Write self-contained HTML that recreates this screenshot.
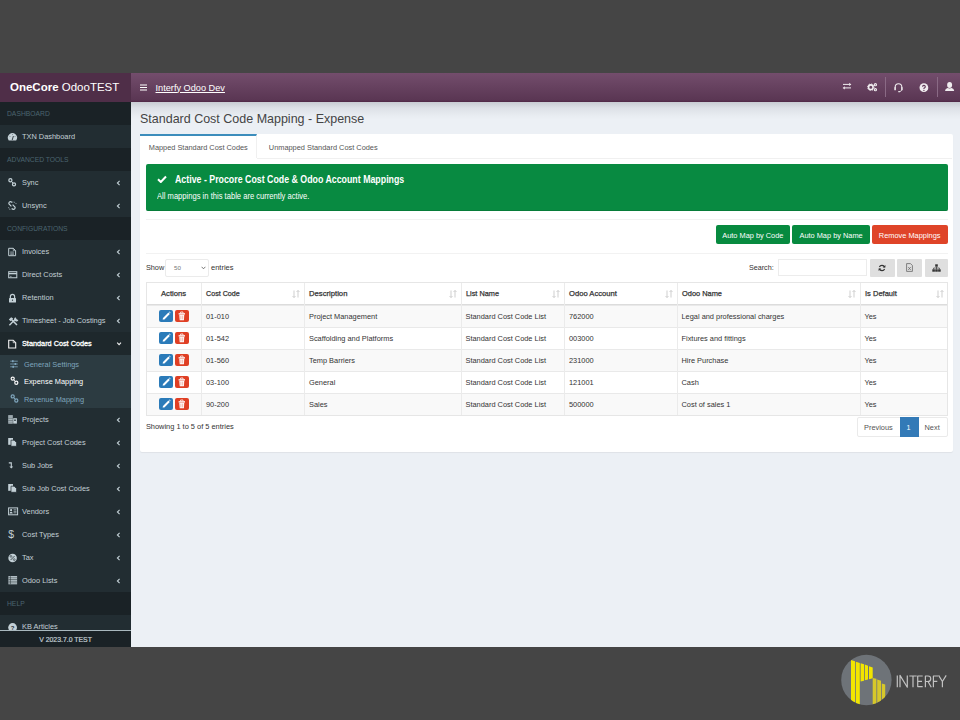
<!DOCTYPE html>
<html><head><meta charset="utf-8">
<style>
*{box-sizing:border-box;margin:0;padding:0}
html,body{width:960px;height:720px;overflow:hidden;background:#454545;font-family:"Liberation Sans",sans-serif}
.abs{position:absolute}
#app{position:absolute;left:0;top:73px;width:960px;height:574px;background:#ecf0f5;overflow:hidden}
#brand{position:absolute;left:0;top:0;width:131px;height:29px;background:#4f2e48;color:#fff;font-size:11.5px;white-space:nowrap}
#nav{position:absolute;left:131px;top:0;width:829px;height:29px;background:linear-gradient(#734d6c,#5a3653 93%,#4f2745 100%)}
#side{position:absolute;left:0;top:29px;width:131px;height:545px;background:#222d32;overflow:hidden}
.row{position:absolute;left:0;width:131px;height:23px;white-space:nowrap}
.hdr{background:#1a2226;color:#4b646f;font-size:6.75px}
.hdr span{position:absolute;left:7px;top:8px}
.mi{color:#c3d0d6;font-size:7.4px;line-height:7.4px}
.mi.act{background:#1e282c;color:#fff;font-size:7.3px;line-height:7.3px;-webkit-text-stroke:0.3px #fff}
.mi .t{position:absolute;left:22px;top:8px}
.mi.act .t{top:8.3px}
.mi .ic{position:absolute;left:5px;top:4.5px;width:14px;height:14px;line-height:0}
.mi .ch{position:absolute;left:116px;top:8px;width:6px;height:8px;line-height:0}
.sub{position:absolute;left:0;width:131px;background:#2c3b41}
.si{position:absolute;left:0;width:131px;height:17px;font-size:7.4px;color:#7fa5bc;white-space:nowrap}
.si .t{position:absolute;left:24px;top:4px}
.si .ic{position:absolute;left:7px;top:0;width:14px;height:14px;line-height:0}
svg{display:block}
#foot{position:absolute;left:0;top:528px;width:131px;height:17px;background:#1a2226;border-top:1px solid #a9b8be;color:#c0ccd1;font-size:6.9px;line-height:6.9px;-webkit-text-stroke:0.2px #c0ccd1;text-align:center;padding-top:5.6px}
#content{position:absolute;left:131px;top:28px;width:829px;height:546px}
.box{position:absolute;left:9px;top:33px;width:812px;height:317px;background:#fff;border-radius:2px}
.th{font-size:7.7px;line-height:7.7px;color:#333;-webkit-text-stroke:0.25px #333;white-space:nowrap}
.th span{transform-origin:0 0}
.td{font-size:7.4px;color:#333;white-space:nowrap}
.btnsm{width:13.5px;height:12.2px;border-radius:2px}
.btn{position:absolute;top:152px;height:19px;border-radius:2px;color:#fff;font-size:7.4px;text-align:center;padding-top:5.5px;white-space:nowrap}
.ibtn{position:absolute;top:186px;height:17.5px;background:#dfdfdf;border-radius:1px}
</style></head>
<body>
<div id="app">
  <div id="brand"><span class="abs" style="left:10px;top:8px"><b>OneCore</b> OdooTEST</span></div>
  <div id="nav">
    <svg class="abs" style="left:9px;top:11px" width="7" height="7" viewBox="0 0 7 7"><path d="M0 1 H7 M0 3.5 H7 M0 6 H7" stroke="#fff" stroke-width="1.2"/></svg>
    <span class="abs" style="left:24.5px;top:9.5px;color:#fff;font-size:9.2px;text-decoration:underline;white-space:nowrap">Interfy Odoo Dev</span>
  </div>
  <div id="side">
<div class="row hdr" style="top:0px"><span>DASHBOARD</span></div>
<div class="row mi" style="top:23px"><span class="ic"><svg width="14" height="14" viewBox="0 0 14 14" ><path d="M3.75 10.4 A4.55 4.55 0 1 1 11.15 10.4 Z" fill="#c3d0d6"/><path d="M7.2 10 L8.4 6" stroke="#222d32" stroke-width="0.9"/><circle cx="5" cy="6.6" r="0.45" fill="#222d32"/><circle cx="7.45" cy="4.6" r="0.45" fill="#222d32"/><circle cx="10" cy="6.6" r="0.45" fill="#222d32"/></svg></span><span class="t">TXN Dashboard</span></div>
<div class="row hdr" style="top:46px"><span>ADVANCED TOOLS</span></div>
<div class="row mi" style="top:69px"><span class="ic"><svg width="14" height="14" viewBox="0 0 14 14" ><circle cx="5.4" cy="4.2" r="1.55" fill="none" stroke="#c3d0d6" stroke-width="1.25"/><circle cx="9" cy="8.3" r="1.55" fill="none" stroke="#c3d0d6" stroke-width="1.25"/><path d="M6.3 5.3 L8.1 7.2" stroke="#c3d0d6" stroke-width="1"/></svg></span><span class="t">Sync</span><span class="ch"><svg width="5" height="8" viewBox="0 0 5 8" ><path d="M3.6 1.9 L1.4 4 L3.6 6.1" fill="none" stroke="#c3d0d6" stroke-width="1.1"/></svg></span></div>
<div class="row mi" style="top:92px"><span class="ic"><svg width="14" height="14" viewBox="0 0 14 14" ><path d="M7.4 3.4 L6.2 2.9 A1.6 1.6 0 0 0 4 5 L6.4 7.4" fill="none" stroke="#c3d0d6" stroke-width="1.2"/><path d="M7.6 5.6 L10 8 A1.6 1.6 0 0 1 7.8 10.1 L6.6 9.6" fill="none" stroke="#c3d0d6" stroke-width="1.2"/><path d="M9 2.6 L9.4 4 M10.4 4.4 L11.6 4.6 M3 8.6 L4.2 8.8 M4.6 9.6 L5 11" stroke="#c3d0d6" stroke-width="0.6"/></svg></span><span class="t">Unsync</span><span class="ch"><svg width="5" height="8" viewBox="0 0 5 8" ><path d="M3.6 1.9 L1.4 4 L3.6 6.1" fill="none" stroke="#c3d0d6" stroke-width="1.1"/></svg></span></div>
<div class="row hdr" style="top:115px"><span>CONFIGURATIONS</span></div>
<div class="row mi" style="top:138px"><span class="ic"><svg width="14" height="14" viewBox="0 0 14 14" ><path d="M3.7 3.3 H8.3 L10.6 5.6 V10.7 H3.7 Z" fill="none" stroke="#c3d0d6" stroke-width="1"/><path d="M8.3 3.3 V5.6 H10.6" fill="none" stroke="#c3d0d6" stroke-width="0.7"/><path d="M5.2 7 H9 M5.2 8.2 H9 M5.2 9.4 H9" stroke="#c3d0d6" stroke-width="0.6"/></svg></span><span class="t">Invoices</span><span class="ch"><svg width="5" height="8" viewBox="0 0 5 8" ><path d="M3.6 1.9 L1.4 4 L3.6 6.1" fill="none" stroke="#c3d0d6" stroke-width="1.1"/></svg></span></div>
<div class="row mi" style="top:161px"><span class="ic"><svg width="14" height="14" viewBox="0 0 14 14" ><rect x="3.7" y="3.7" width="8.1" height="6.05" fill="none" stroke="#c3d0d6" stroke-width="1"/><rect x="3.7" y="4.9" width="8.1" height="1.4" fill="#c3d0d6"/><path d="M5 8.4 H6.6" stroke="#c3d0d6" stroke-width="0.6"/></svg></span><span class="t">Direct Costs</span><span class="ch"><svg width="5" height="8" viewBox="0 0 5 8" ><path d="M3.6 1.9 L1.4 4 L3.6 6.1" fill="none" stroke="#c3d0d6" stroke-width="1.1"/></svg></span></div>
<div class="row mi" style="top:184px"><span class="ic"><svg width="14" height="14" viewBox="0 0 14 14" ><rect x="4" y="7" width="7" height="4.5" rx="0.5" fill="#c3d0d6"/><path d="M5.4 7 V5.4 A2.1 2.1 0 0 1 9.6 5.4 V7" fill="none" stroke="#c3d0d6" stroke-width="1.2"/><circle cx="7.5" cy="9.2" r="0.6" fill="#222d32"/></svg></span><span class="t">Retention</span><span class="ch"><svg width="5" height="8" viewBox="0 0 5 8" ><path d="M3.6 1.9 L1.4 4 L3.6 6.1" fill="none" stroke="#c3d0d6" stroke-width="1.1"/></svg></span></div>
<div class="row mi" style="top:207px"><span class="ic"><svg width="14" height="14" viewBox="0 0 14 14" ><path d="M4.4 11.2 L11 4.6" stroke="#c3d0d6" stroke-width="1.4"/><path d="M10.6 3.2 A2.2 2.2 0 1 0 13.4 6 L12 5.6 L11.2 4.8 Z" fill="#c3d0d6"/><path d="M6.6 5.6 L12 11" stroke="#c3d0d6" stroke-width="1.5"/><path d="M3.8 5.4 L6.2 3.3 L8.2 4.6 L5.6 7.2 Z" fill="#c3d0d6"/></svg></span><span class="t">Timesheet - Job Costings</span><span class="ch"><svg width="5" height="8" viewBox="0 0 5 8" ><path d="M3.6 1.9 L1.4 4 L3.6 6.1" fill="none" stroke="#c3d0d6" stroke-width="1.1"/></svg></span></div>
<div class="row mi act" style="top:230px"><span class="ic"><svg width="14" height="14" viewBox="0 0 14 14" ><path d="M3.7 3.2 H8.2 L10.7 5.7 V11 H3.7 Z" fill="none" stroke="#f2f2f2" stroke-width="1.1"/><path d="M8.2 3.2 V5.7 H10.7" fill="none" stroke="#f2f2f2" stroke-width="0.7"/></svg></span><span class="t">Standard Cost Codes</span><span class="ch"><svg width="6" height="7" viewBox="0 0 6 7" ><path d="M1.2 2.7 L3.1 4.6 L5 2.7" fill="none" stroke="#f2f2f2" stroke-width="1.1"/></svg></span></div>
<div class="sub" style="top:253px;height:53px"><div class="si" style="top:0.8px"><span class="ic"><svg width="14" height="14" viewBox="0 0 14 14" ><path d="M3.2 5.2 H10.8 M3.2 8 H10.8 M3.2 10.8 H10.8" stroke="#7fa5bc" stroke-width="0.8"/><rect x="5" y="4.2" width="1.6" height="2" fill="#7fa5bc"/><rect x="7.6" y="7" width="1.6" height="2" fill="#7fa5bc"/><rect x="5.4" y="9.8" width="1.6" height="2" fill="#7fa5bc"/></svg></span><span class="t">General Settings</span></div><div class="si" style="top:18.2px;color:#fff"><span class="ic"><svg width="14" height="14" viewBox="0 0 14 14" ><g transform="translate(0.3 1.4)"><circle cx="5.4" cy="4.2" r="1.55" fill="none" stroke="#f5f5f5" stroke-width="1.25"/><circle cx="9" cy="8.3" r="1.55" fill="none" stroke="#f5f5f5" stroke-width="1.25"/><path d="M6.3 5.3 L8.1 7.2" stroke="#f5f5f5" stroke-width="1"/></g></svg></span><span class="t">Expense Mapping</span></div><div class="si" style="top:35.6px"><span class="ic"><svg width="14" height="14" viewBox="0 0 14 14" ><g transform="translate(0.3 1.2)"><circle cx="5.4" cy="4.2" r="1.55" fill="none" stroke="#7fa5bc" stroke-width="1.25"/><circle cx="9" cy="8.3" r="1.55" fill="none" stroke="#7fa5bc" stroke-width="1.25"/><path d="M6.3 5.3 L8.1 7.2" stroke="#7fa5bc" stroke-width="1"/></g></svg></span><span class="t">Revenue Mapping</span></div></div>
<div class="row mi" style="top:306px"><span class="ic"><svg width="14" height="14" viewBox="0 0 14 14" ><rect x="3.2" y="2.3" width="4.6" height="8.3" fill="#c3d0d6"/><rect x="8.2" y="5.2" width="3.7" height="5.4" fill="#c3d0d6"/><path d="M3.2 4 H7.8 M3.2 5.7 H7.8 M3.2 7.4 H7.8 M3.2 9.1 H7.8" stroke="#222d32" stroke-width="0.5"/><rect x="9.2" y="6.5" width="1.6" height="1.4" fill="#222d32"/></svg></span><span class="t">Projects</span><span class="ch"><svg width="5" height="8" viewBox="0 0 5 8" ><path d="M3.6 1.9 L1.4 4 L3.6 6.1" fill="none" stroke="#c3d0d6" stroke-width="1.1"/></svg></span></div>
<div class="row mi" style="top:329px"><span class="ic"><svg width="14" height="14" viewBox="0 0 14 14" ><rect x="3.2" y="2" width="4.8" height="6.8" fill="#c3d0d6"/><path d="M6 4.2 H9.2 L11.5 6.5 V10.3 H6 Z" fill="#c3d0d6" stroke="#222d32" stroke-width="0.7"/></svg></span><span class="t">Project Cost Codes</span><span class="ch"><svg width="5" height="8" viewBox="0 0 5 8" ><path d="M3.6 1.9 L1.4 4 L3.6 6.1" fill="none" stroke="#c3d0d6" stroke-width="1.1"/></svg></span></div>
<div class="row mi" style="top:352px"><span class="ic"><svg width="14" height="14" viewBox="0 0 14 14" ><path d="M3.8 3.9 H6.3 V8" fill="none" stroke="#c3d0d6" stroke-width="1.1"/><path d="M4.4 7.6 H8.2 L6.3 9.6 Z" fill="#c3d0d6"/></svg></span><span class="t">Sub Jobs</span><span class="ch"><svg width="5" height="8" viewBox="0 0 5 8" ><path d="M3.6 1.9 L1.4 4 L3.6 6.1" fill="none" stroke="#c3d0d6" stroke-width="1.1"/></svg></span></div>
<div class="row mi" style="top:375px"><span class="ic"><svg width="14" height="14" viewBox="0 0 14 14" ><rect x="3.2" y="2" width="4.8" height="6.8" fill="#c3d0d6"/><path d="M6 4.2 H9.2 L11.5 6.5 V10.3 H6 Z" fill="#c3d0d6" stroke="#222d32" stroke-width="0.7"/></svg></span><span class="t">Sub Job Cost Codes</span><span class="ch"><svg width="5" height="8" viewBox="0 0 5 8" ><path d="M3.6 1.9 L1.4 4 L3.6 6.1" fill="none" stroke="#c3d0d6" stroke-width="1.1"/></svg></span></div>
<div class="row mi" style="top:398px"><span class="ic"><svg width="14" height="14" viewBox="0 0 14 14" ><rect x="3.6" y="2.9" width="9" height="6.9" fill="none" stroke="#c3d0d6" stroke-width="1"/><circle cx="6.1" cy="5.2" r="1.1" fill="#c3d0d6"/><path d="M4.5 8.6 Q4.6 6.7 6.1 6.7 Q7.6 6.7 7.7 8.6 Z" fill="#c3d0d6"/><path d="M8.6 4.8 H11.5 M8.6 6.3 H11.5 M8.6 7.8 H11.5" stroke="#c3d0d6" stroke-width="0.7"/></svg></span><span class="t">Vendors</span><span class="ch"><svg width="5" height="8" viewBox="0 0 5 8" ><path d="M3.6 1.9 L1.4 4 L3.6 6.1" fill="none" stroke="#c3d0d6" stroke-width="1.1"/></svg></span></div>
<div class="row mi" style="top:421px"><span class="ic"><svg width="14" height="14" viewBox="0 0 14 14" ><text x="6.1" y="10.3" font-family="Liberation Sans" font-size="10.5" text-anchor="middle" fill="#c3d0d6">$</text></svg></span><span class="t">Cost Types</span><span class="ch"><svg width="5" height="8" viewBox="0 0 5 8" ><path d="M3.6 1.9 L1.4 4 L3.6 6.1" fill="none" stroke="#c3d0d6" stroke-width="1.1"/></svg></span></div>
<div class="row mi" style="top:444px"><span class="ic"><svg width="14" height="14" viewBox="0 0 14 14" ><circle cx="7.6" cy="7" r="4.3" fill="#c3d0d6"/><path d="M5.6 9 L9.6 5" stroke="#222d32" stroke-width="0.8"/><circle cx="6" cy="5.4" r="0.9" fill="none" stroke="#222d32" stroke-width="0.6"/><circle cx="9.2" cy="8.6" r="0.9" fill="none" stroke="#222d32" stroke-width="0.6"/></svg></span><span class="t">Tax</span><span class="ch"><svg width="5" height="8" viewBox="0 0 5 8" ><path d="M3.6 1.9 L1.4 4 L3.6 6.1" fill="none" stroke="#c3d0d6" stroke-width="1.1"/></svg></span></div>
<div class="row mi" style="top:467px"><span class="ic"><svg width="14" height="14" viewBox="0 0 14 14" ><rect x="3.4" y="2.1" width="8.7" height="8.2" fill="#c3d0d6"/><path d="M3.4 3.8 H12.1 M3.4 5.5 H12.1 M3.4 7.2 H12.1 M3.4 8.9 H12.1 M5.4 2.1 V10.3" stroke="#222d32" stroke-width="0.55"/></svg></span><span class="t">Odoo Lists</span><span class="ch"><svg width="5" height="8" viewBox="0 0 5 8" ><path d="M3.6 1.9 L1.4 4 L3.6 6.1" fill="none" stroke="#c3d0d6" stroke-width="1.1"/></svg></span></div>
<div class="row hdr" style="top:490px"><span>HELP</span></div>
<div class="row mi" style="top:513px"><span class="ic"><svg width="14" height="14" viewBox="0 0 14 14" ><circle cx="7.6" cy="7.5" r="4.4" fill="#c3d0d6"/><text x="7.6" y="9.6" font-family="Liberation Sans" font-weight="bold" font-size="6" text-anchor="middle" fill="#222d32">?</text></svg></span><span class="t">KB Articles</span></div>
  <div id="foot">V 2023.7.0 TEST</div>
  </div>
  <div id="content">
    <div class="abs" style="left:0;top:0.7px;width:829px;height:18px;background:linear-gradient(rgba(20,25,40,0.17),rgba(20,25,40,0.07) 6px,rgba(20,25,40,0.015) 14px,rgba(20,25,40,0) 18px)"></div>
    <span class="abs" style="left:9px;top:10.8px;font-size:13.2px;line-height:13.2px;color:#444;white-space:nowrap;transform:scaleX(0.947);transform-origin:0 0">Standard Cost Code Mapping - Expense</span>
  </div>
  <div class="abs" style="left:140px;top:61px;width:813px;height:317.8px;background:#fff;border-radius:2px;box-shadow:0 1px 1px rgba(0,0,0,0.06)"></div>
  <!-- tabs -->
  <div class="abs" style="left:140px;top:61px;width:116.5px;height:24px;border-top:2px solid #3c8dbc;border-right:1px solid #f0f0f0"></div>
  <div class="abs" style="left:256.5px;top:84.5px;width:695.5px;height:1px;background:#f0f0f0"></div>
  <span class="abs" style="left:148.8px;top:69.5px;font-size:7.36px;color:#555;white-space:nowrap">Mapped Standard Cost Codes</span>
  <span class="abs" style="left:268.8px;top:69.5px;font-size:7.4px;color:#555;white-space:nowrap">Unmapped Standard Cost Codes</span>
  <!-- callout -->
  <div class="abs" style="left:146px;top:91.2px;width:802px;height:46.5px;background:#088a41;border-radius:2px;border-bottom:1px solid #067c39"></div>
  <svg class="abs" style="left:157px;top:101.5px" width="10" height="8" viewBox="0 0 10 8"><path d="M1 4.2 L3.8 7 L9 1.5" fill="none" stroke="#fff" stroke-width="2"/></svg>
  <span class="abs" style="left:174.7px;top:102.3px;font-size:10px;line-height:10px;font-weight:bold;color:#fff;white-space:nowrap;transform:scaleX(0.881);transform-origin:0 0">Active - Procore Cost Code &amp; Odoo Account Mappings</span>
  <span class="abs" style="left:156.8px;top:120px;font-size:8.2px;line-height:8.2px;color:#fff;white-space:nowrap;transform:scaleX(0.928);transform-origin:0 0">All mappings in this table are currently active.</span>
  <div class="abs" style="left:146px;top:145.5px;width:802px;height:1px;background:#f2f2f2"></div>
  <!-- buttons -->
  <div class="btn" style="left:715.5px;width:74.7px;background:#078a3f">Auto Map by Code</div>
  <div class="btn" style="left:792.4px;width:77.4px;background:#078a3f">Auto Map by Name</div>
  <div class="btn" style="left:871.5px;width:76.3px;background:#df4428">Remove Mappings</div>
  <div class="abs" style="left:146px;top:180px;width:802px;height:1px;background:#f2f2f2"></div>
  <!-- show entries -->
  <span class="abs" style="left:145.9px;top:190px;font-size:7.34px;color:#333;white-space:nowrap">Show</span>
  <div class="abs" style="left:165.2px;top:185.8px;width:44px;height:17.8px;border:1px solid #ebebeb;border-radius:2px;background:#fff"></div>
  <span class="abs" style="left:174px;top:191px;font-size:6.2px;color:#777;white-space:nowrap">50</span>
  <svg class="abs" style="left:201.2px;top:192.5px" width="5" height="4" viewBox="0 0 5 4"><path d="M0.6 0.8 L2.5 2.8 L4.4 0.8" fill="none" stroke="#555" stroke-width="0.8"/></svg>
  <span class="abs" style="left:211px;top:190px;font-size:7.5px;color:#333;white-space:nowrap">entries</span>
  <!-- search -->
  <span class="abs" style="left:749px;top:191px;font-size:7.17px;color:#333;white-space:nowrap">Search:</span>
  <div class="abs" style="left:777.7px;top:185.8px;width:89px;height:17.6px;border:1px solid #ececec;background:#fff"></div>
  <div class="ibtn" style="left:869.6px;width:25px"></div>
  <div class="ibtn" style="left:897.2px;width:25.2px"></div>
  <div class="ibtn" style="left:925px;width:22.8px"></div>
  <svg class="abs" style="left:878px;top:190.5px" width="8" height="8" viewBox="0 0 8 8"><path d="M6.6 3.2 A2.8 2.8 0 0 0 1.4 3 M1.4 4.8 A2.8 2.8 0 0 0 6.6 5" fill="none" stroke="#333" stroke-width="1.2"/><path d="M7.4 1 V3.6 H4.8 Z M0.6 7 V4.4 H3.2 Z" fill="#333"/></svg>
  <svg class="abs" style="left:906px;top:190px" width="7" height="9" viewBox="0 0 7 9"><path d="M0.6 0.6 H4.5 L6.4 2.5 V8.4 H0.6 Z" fill="none" stroke="#666" stroke-width="0.8"/><path d="M2.2 4 L4.8 7 M4.8 4 L2.2 7" stroke="#666" stroke-width="0.7"/></svg>
  <svg class="abs" style="left:932px;top:190.5px" width="9" height="8" viewBox="0 0 9 8"><rect x="3.2" y="0.3" width="2.6" height="2.4" fill="#333"/><rect x="0.3" y="5.3" width="2.6" height="2.4" fill="#333"/><rect x="3.2" y="5.3" width="2.6" height="2.4" fill="#333"/><rect x="6.1" y="5.3" width="2.6" height="2.4" fill="#333"/><path d="M4.5 2.7 V5.3 M1.6 5.3 V4 H7.4 V5.3" fill="none" stroke="#333" stroke-width="0.7"/></svg>
  <!-- table -->
<div class="abs th" style="left:146px;top:209.3px;width:55px;height:21.8px"><span class="abs" style="left:15px;top:8.1px;transform:scaleX(0.999)">Actions</span></div>
<div class="abs th" style="left:201px;top:209.3px;width:103px;height:21.8px"><span class="abs" style="left:5.2px;top:8.1px;transform:scaleX(0.930)">Cost Code</span><span class="abs" style="right:4px;top:8px;width:8px;height:8px"><svg width="8" height="8" viewBox="0 0 8 8"><path d="M2 0.5 V7.5 M0.5 6 L2 7.5 L3.5 6 M6 7.5 V0.5 M4.5 2 L6 0.5 L7.5 2" fill="none" stroke="#c9c9c9" stroke-width="0.9"/></svg></span></div>
<div class="abs th" style="left:304px;top:209.3px;width:156.5px;height:21.8px"><span class="abs" style="left:5.2px;top:8.1px;transform:scaleX(0.999)">Description</span><span class="abs" style="right:4px;top:8px;width:8px;height:8px"><svg width="8" height="8" viewBox="0 0 8 8"><path d="M2 0.5 V7.5 M0.5 6 L2 7.5 L3.5 6 M6 7.5 V0.5 M4.5 2 L6 0.5 L7.5 2" fill="none" stroke="#c9c9c9" stroke-width="0.9"/></svg></span></div>
<div class="abs th" style="left:460.5px;top:209.3px;width:103.5px;height:21.8px"><span class="abs" style="left:5.2px;top:8.1px;transform:scaleX(0.953)">List Name</span><span class="abs" style="right:4px;top:8px;width:8px;height:8px"><svg width="8" height="8" viewBox="0 0 8 8"><path d="M2 0.5 V7.5 M0.5 6 L2 7.5 L3.5 6 M6 7.5 V0.5 M4.5 2 L6 0.5 L7.5 2" fill="none" stroke="#c9c9c9" stroke-width="0.9"/></svg></span></div>
<div class="abs th" style="left:564px;top:209.3px;width:112.5px;height:21.8px"><span class="abs" style="left:5.2px;top:8.1px;transform:scaleX(0.992)">Odoo Account</span><span class="abs" style="right:4px;top:8px;width:8px;height:8px"><svg width="8" height="8" viewBox="0 0 8 8"><path d="M2 0.5 V7.5 M0.5 6 L2 7.5 L3.5 6 M6 7.5 V0.5 M4.5 2 L6 0.5 L7.5 2" fill="none" stroke="#c9c9c9" stroke-width="0.9"/></svg></span></div>
<div class="abs th" style="left:676.5px;top:209.3px;width:183.0px;height:21.8px"><span class="abs" style="left:5.2px;top:8.1px;transform:scaleX(0.965)">Odoo Name</span><span class="abs" style="right:4px;top:8px;width:8px;height:8px"><svg width="8" height="8" viewBox="0 0 8 8"><path d="M2 0.5 V7.5 M0.5 6 L2 7.5 L3.5 6 M6 7.5 V0.5 M4.5 2 L6 0.5 L7.5 2" fill="none" stroke="#c9c9c9" stroke-width="0.9"/></svg></span></div>
<div class="abs th" style="left:859.5px;top:209.3px;width:88.5px;height:21.8px"><span class="abs" style="left:5.2px;top:8.1px;transform:scaleX(0.979)">Is Default</span><span class="abs" style="right:4px;top:8px;width:8px;height:8px"><svg width="8" height="8" viewBox="0 0 8 8"><path d="M2 0.5 V7.5 M0.5 6 L2 7.5 L3.5 6 M6 7.5 V0.5 M4.5 2 L6 0.5 L7.5 2" fill="none" stroke="#c9c9c9" stroke-width="0.9"/></svg></span></div>
<div class="abs" style="left:146px;top:231.10000000000002px;width:802px;height:1.5px;background:#dcdcdc"></div>
<div class="abs" style="left:147px;top:232.10000000000002px;width:800px;height:22.05px;background:#f9f9f9;border-top:1px solid #e9e9e9"></div>
<div class="abs btnsm" style="left:159px;top:237.10000000000002px;background:#2b7bb9"><svg width="13.5" height="12" viewBox="0 0 13.5 12"><path d="M3.6 9.6 L4 8 L9.4 2.6 L10.8 4 L5.4 9.4 Z" fill="#fff"/><path d="M9.9 2.1 L10.5 1.6 L11.6 2.7 L11.3 3.3 Z" fill="#fff"/></svg></div>
<div class="abs btnsm" style="left:175px;top:237.10000000000002px;background:#df3f24"><svg width="13.5" height="12" viewBox="0 0 13.5 12"><rect x="3.6" y="3.2" width="6.4" height="1.3" fill="#fff"/><path d="M5.6 3.2 V2 H8 V3.2" fill="none" stroke="#fff" stroke-width="0.8"/><path d="M4.3 4.8 H9.3 L8.9 10.2 H4.7 Z" fill="#fff"/><path d="M5.9 5.6 V9.4 M7.7 5.6 V9.4" stroke="#e7836f" stroke-width="0.6"/></svg></div>
<span class="abs td" style="left:206px;top:238.70000000000005px">01-010</span>
<span class="abs td" style="left:309px;top:238.70000000000005px">Project Management</span>
<span class="abs td" style="left:465.5px;top:238.70000000000005px">Standard Cost Code List</span>
<span class="abs td" style="left:569px;top:238.70000000000005px">762000</span>
<span class="abs td" style="left:681.5px;top:238.70000000000005px">Legal and professional charges</span>
<span class="abs td" style="left:864.5px;top:238.70000000000005px">Yes</span>
<div class="abs" style="left:147px;top:254.15000000000003px;width:800px;height:22.05px;background:#fff;border-top:1px solid #e9e9e9"></div>
<div class="abs btnsm" style="left:159px;top:259.15000000000003px;background:#2b7bb9"><svg width="13.5" height="12" viewBox="0 0 13.5 12"><path d="M3.6 9.6 L4 8 L9.4 2.6 L10.8 4 L5.4 9.4 Z" fill="#fff"/><path d="M9.9 2.1 L10.5 1.6 L11.6 2.7 L11.3 3.3 Z" fill="#fff"/></svg></div>
<div class="abs btnsm" style="left:175px;top:259.15000000000003px;background:#df3f24"><svg width="13.5" height="12" viewBox="0 0 13.5 12"><rect x="3.6" y="3.2" width="6.4" height="1.3" fill="#fff"/><path d="M5.6 3.2 V2 H8 V3.2" fill="none" stroke="#fff" stroke-width="0.8"/><path d="M4.3 4.8 H9.3 L8.9 10.2 H4.7 Z" fill="#fff"/><path d="M5.9 5.6 V9.4 M7.7 5.6 V9.4" stroke="#e7836f" stroke-width="0.6"/></svg></div>
<span class="abs td" style="left:206px;top:260.75000000000006px">01-542</span>
<span class="abs td" style="left:309px;top:260.75000000000006px">Scaffolding and Platforms</span>
<span class="abs td" style="left:465.5px;top:260.75000000000006px">Standard Cost Code List</span>
<span class="abs td" style="left:569px;top:260.75000000000006px">003000</span>
<span class="abs td" style="left:681.5px;top:260.75000000000006px">Fixtures and fittings</span>
<span class="abs td" style="left:864.5px;top:260.75000000000006px">Yes</span>
<div class="abs" style="left:147px;top:276.20000000000005px;width:800px;height:22.05px;background:#f9f9f9;border-top:1px solid #e9e9e9"></div>
<div class="abs btnsm" style="left:159px;top:281.20000000000005px;background:#2b7bb9"><svg width="13.5" height="12" viewBox="0 0 13.5 12"><path d="M3.6 9.6 L4 8 L9.4 2.6 L10.8 4 L5.4 9.4 Z" fill="#fff"/><path d="M9.9 2.1 L10.5 1.6 L11.6 2.7 L11.3 3.3 Z" fill="#fff"/></svg></div>
<div class="abs btnsm" style="left:175px;top:281.20000000000005px;background:#df3f24"><svg width="13.5" height="12" viewBox="0 0 13.5 12"><rect x="3.6" y="3.2" width="6.4" height="1.3" fill="#fff"/><path d="M5.6 3.2 V2 H8 V3.2" fill="none" stroke="#fff" stroke-width="0.8"/><path d="M4.3 4.8 H9.3 L8.9 10.2 H4.7 Z" fill="#fff"/><path d="M5.9 5.6 V9.4 M7.7 5.6 V9.4" stroke="#e7836f" stroke-width="0.6"/></svg></div>
<span class="abs td" style="left:206px;top:282.80000000000007px">01-560</span>
<span class="abs td" style="left:309px;top:282.80000000000007px">Temp Barriers</span>
<span class="abs td" style="left:465.5px;top:282.80000000000007px">Standard Cost Code List</span>
<span class="abs td" style="left:569px;top:282.80000000000007px">231000</span>
<span class="abs td" style="left:681.5px;top:282.80000000000007px">Hire Purchase</span>
<span class="abs td" style="left:864.5px;top:282.80000000000007px">Yes</span>
<div class="abs" style="left:147px;top:298.25px;width:800px;height:22.05px;background:#fff;border-top:1px solid #e9e9e9"></div>
<div class="abs btnsm" style="left:159px;top:303.25px;background:#2b7bb9"><svg width="13.5" height="12" viewBox="0 0 13.5 12"><path d="M3.6 9.6 L4 8 L9.4 2.6 L10.8 4 L5.4 9.4 Z" fill="#fff"/><path d="M9.9 2.1 L10.5 1.6 L11.6 2.7 L11.3 3.3 Z" fill="#fff"/></svg></div>
<div class="abs btnsm" style="left:175px;top:303.25px;background:#df3f24"><svg width="13.5" height="12" viewBox="0 0 13.5 12"><rect x="3.6" y="3.2" width="6.4" height="1.3" fill="#fff"/><path d="M5.6 3.2 V2 H8 V3.2" fill="none" stroke="#fff" stroke-width="0.8"/><path d="M4.3 4.8 H9.3 L8.9 10.2 H4.7 Z" fill="#fff"/><path d="M5.9 5.6 V9.4 M7.7 5.6 V9.4" stroke="#e7836f" stroke-width="0.6"/></svg></div>
<span class="abs td" style="left:206px;top:304.85px">03-100</span>
<span class="abs td" style="left:309px;top:304.85px">General</span>
<span class="abs td" style="left:465.5px;top:304.85px">Standard Cost Code List</span>
<span class="abs td" style="left:569px;top:304.85px">121001</span>
<span class="abs td" style="left:681.5px;top:304.85px">Cash</span>
<span class="abs td" style="left:864.5px;top:304.85px">Yes</span>
<div class="abs" style="left:147px;top:320.3px;width:800px;height:22.05px;background:#f9f9f9;border-top:1px solid #e9e9e9"></div>
<div class="abs btnsm" style="left:159px;top:325.3px;background:#2b7bb9"><svg width="13.5" height="12" viewBox="0 0 13.5 12"><path d="M3.6 9.6 L4 8 L9.4 2.6 L10.8 4 L5.4 9.4 Z" fill="#fff"/><path d="M9.9 2.1 L10.5 1.6 L11.6 2.7 L11.3 3.3 Z" fill="#fff"/></svg></div>
<div class="abs btnsm" style="left:175px;top:325.3px;background:#df3f24"><svg width="13.5" height="12" viewBox="0 0 13.5 12"><rect x="3.6" y="3.2" width="6.4" height="1.3" fill="#fff"/><path d="M5.6 3.2 V2 H8 V3.2" fill="none" stroke="#fff" stroke-width="0.8"/><path d="M4.3 4.8 H9.3 L8.9 10.2 H4.7 Z" fill="#fff"/><path d="M5.9 5.6 V9.4 M7.7 5.6 V9.4" stroke="#e7836f" stroke-width="0.6"/></svg></div>
<span class="abs td" style="left:206px;top:326.90000000000003px">90-200</span>
<span class="abs td" style="left:309px;top:326.90000000000003px">Sales</span>
<span class="abs td" style="left:465.5px;top:326.90000000000003px">Standard Cost Code List</span>
<span class="abs td" style="left:569px;top:326.90000000000003px">500000</span>
<span class="abs td" style="left:681.5px;top:326.90000000000003px">Cost of sales 1</span>
<span class="abs td" style="left:864.5px;top:326.90000000000003px">Yes</span>
<div class="abs" style="left:201px;top:209.3px;width:1px;height:133.05px;background:#ebebeb"></div>
<div class="abs" style="left:304px;top:209.3px;width:1px;height:133.05px;background:#ebebeb"></div>
<div class="abs" style="left:460.5px;top:209.3px;width:1px;height:133.05px;background:#ebebeb"></div>
<div class="abs" style="left:564px;top:209.3px;width:1px;height:133.05px;background:#ebebeb"></div>
<div class="abs" style="left:676.5px;top:209.3px;width:1px;height:133.05px;background:#ebebeb"></div>
<div class="abs" style="left:859.5px;top:209.3px;width:1px;height:133.05px;background:#ebebeb"></div>
<div class="abs" style="left:146px;top:209.3px;width:802px;height:133.75px;border:1px solid #e6e6e6"></div>
  <span class="abs" style="left:145.9px;top:349px;font-size:7.43px;color:#333;white-space:nowrap">Showing 1 to 5 of 5 entries</span>
  <!-- pagination -->
  <div class="abs" style="left:857px;top:344px;width:91px;height:19.5px;border:1px solid #eaeaea;border-radius:2px;background:#fff"></div>
  <div class="abs" style="left:900.2px;top:344px;width:18.4px;height:19.5px;background:#337ab7"></div>
  <span class="abs" style="left:864px;top:350px;font-size:7.4px;color:#555;white-space:nowrap">Previous</span>
  <span class="abs" style="left:906.5px;top:350px;font-size:7.2px;color:#fff;white-space:nowrap">1</span>
  <span class="abs" style="left:924.5px;top:350px;font-size:7.4px;color:#555;white-space:nowrap">Next</span>
</div>

<svg class="abs" style="left:842px;top:82px" width="12" height="10" viewBox="0 0 12 10"><path d="M1 2.4 H7.6 M2.4 5.9 H9" stroke="#f0ecef" stroke-width="1"/><path d="M7.2 0.8 L9.4 2.4 L7.2 4 Z M2.8 4.3 L0.6 5.9 L2.8 7.5 Z" fill="#f0ecef"/></svg>
<svg class="abs" style="left:866px;top:82px" width="12" height="10" viewBox="0 0 12 10"><circle cx="4.8" cy="5.2" r="2.3" fill="none" stroke="#f0ecef" stroke-width="1.6"/><circle cx="4.8" cy="5.2" r="3.3" fill="none" stroke="#f0ecef" stroke-width="0.9" stroke-dasharray="1.1 1.5"/><circle cx="9.4" cy="2.7" r="1.1" fill="none" stroke="#f0ecef" stroke-width="1.1"/><circle cx="9.4" cy="7.7" r="1.1" fill="none" stroke="#f0ecef" stroke-width="1.1"/></svg>
<div class="abs" style="left:885px;top:77px;width:1px;height:20px;background:#8a6a85"></div>
<svg class="abs" style="left:893px;top:82px" width="11" height="11" viewBox="0 0 11 11"><path d="M2.2 6 V5 A3.3 3.3 0 0 1 8.8 5 V6" fill="none" stroke="#f0ecef" stroke-width="1.1"/><rect x="1.3" y="5.2" width="1.6" height="3" rx="0.5" fill="#f0ecef"/><rect x="8.1" y="5.2" width="1.6" height="3" rx="0.5" fill="#f0ecef"/><path d="M8.6 8 Q8.4 9.4 6.8 9.6" fill="none" stroke="#f0ecef" stroke-width="0.8"/><rect x="5.2" y="8.9" width="1.8" height="1.3" rx="0.5" fill="#f0ecef"/></svg>
<svg class="abs" style="left:919px;top:82.5px" width="10" height="10" viewBox="0 0 10 10"><circle cx="4.9" cy="4.7" r="4.4" fill="#f0ecef"/><path d="M3.6 3.7 A1.35 1.35 0 1 1 5.3 5 Q4.9 5.3 4.9 6" fill="none" stroke="#5f3b58" stroke-width="1.1"/><circle cx="4.9" cy="7.4" r="0.65" fill="#5f3b58"/></svg>
<div class="abs" style="left:936.5px;top:77px;width:1px;height:20px;background:#8a6a85"></div>
<svg class="abs" style="left:944px;top:81px" width="11" height="11" viewBox="0 0 11 11"><ellipse cx="5.6" cy="3.9" rx="2.5" ry="3" fill="#f0ecef"/><path d="M1 10.1 Q1.2 7.6 3.6 7 L5.6 7.6 L7.6 7 Q10 7.6 10.2 10.1 Z" fill="#f0ecef"/></svg>

<!-- logo -->
<svg class="abs" style="left:836px;top:650px" width="60" height="60" viewBox="0 0 60 60">
  <defs><clipPath id="cc"><circle cx="30.4" cy="30" r="25.2"/></clipPath></defs>
  <circle cx="30.4" cy="30" r="25.2" fill="#6e7378"/>
  <g clip-path="url(#cc)">
    <path d="M15 10 L19 11.2 V60 H15 Z" fill="#f2e600"/>
    <path d="M19.8 11.7 L23.8 12.9 V60 H19.8 Z" fill="#f2e600"/>
    <path d="M24.6 13.3 L28 14.2 V30.8 L24.6 31.5 Z" fill="#f2e600"/>
    <path d="M28.8 14.6 L32 15.8 V29.6 L28.8 30.3 Z" fill="#f2e600"/>
    <path d="M33 16.2 L36.7 17.5 V28.3 L33 29.2 Z" fill="#f2e600"/>
    <path d="M36.7 28 L40.4 28.8 V60 H36.7 Z" fill="#d6c82a"/>
    <path d="M41.2 29.6 L45 30.8 V60 H41.2 Z" fill="#d6c82a"/>
    <path d="M45.8 33.4 L49.2 34.6 V60 H45.8 Z" fill="#d6c82a"/>
  </g>
</svg>
<svg class="abs" style="left:895px;top:674px" width="54" height="15" viewBox="0 0 54 15">
  <g fill="none" stroke="#c2c2c2" stroke-width="1.2" stroke-linejoin="round">
    <path d="M2.3 1.4 V13.2"/>
    <path d="M5 13.2 V1.4 L12.3 13.2 V1.4"/>
    <path d="M14.3 2 H21.7 M18 2 V13.2"/>
    <path d="M27.7 2 H22.7 V12.6 H27.7 M22.7 7.3 H27"/>
    <path d="M30.4 13.2 V2 H33 A2.75 2.75 0 0 1 33 7.5 H30.4 M33 7.5 L36.3 13.2"/>
    <path d="M43 2 H38.4 V13.2 M38.4 7.3 H42.3"/>
    <path d="M43.6 1.4 L47.4 7.5 L51.2 1.4 M47.4 7.5 V13.2"/>
  </g>
</svg>
</body></html>
